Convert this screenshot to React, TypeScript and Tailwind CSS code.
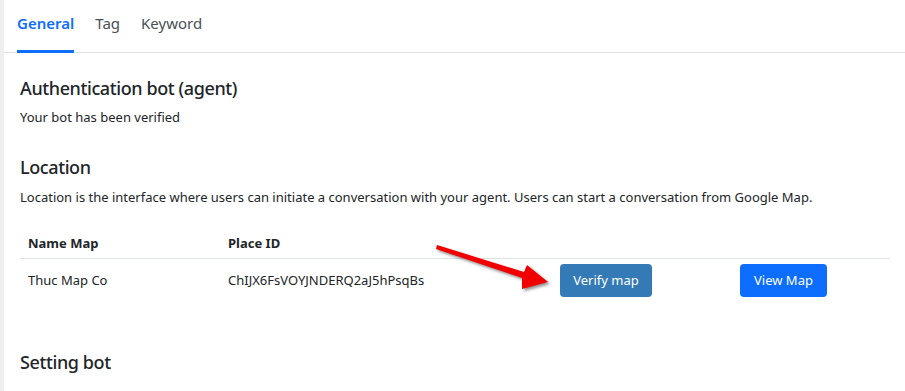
import React from "react";

export default function App() {
  return (
    <div className="relative w-[905px] h-[391px] overflow-hidden bg-white text-[#212529] flex" style={{ fontFamily: '"Noto Sans", "Open Sans", sans-serif' }}>
      <div className="w-[4px] shrink-0 bg-[#efefef]" />
      <div className="flex-1 flex flex-col">
        <div className="h-[53px] border-b border-[#dee2e6] flex items-stretch pl-[13px] gap-[21px] text-[15px]">
          <div className="relative flex items-center text-[#0d6efd] font-semibold pb-[6px]">
            General
            <div className="absolute left-0 right-0 bottom-[-1px] h-[3px] bg-[#0d6efd]" />
          </div>
          <div className="flex items-center pb-[6px] text-[#495057]">Tag</div>
          <div className="flex items-center pb-[6px] text-[#495057]">Keyword</div>
        </div>
        <div className="pl-[16px] pr-[15px]">
          <div className="mt-[23px] text-[18px] leading-[24px] font-medium tracking-[-0.4px]">Authentication bot (agent)</div>
          <div className="mt-[7px] text-[13px] leading-[20px]">Your bot has been verified</div>
          <div className="mt-[28px] text-[18px] leading-[24px] font-medium tracking-[-0.4px]">Location</div>
          <div className="mt-[8px] text-[13px] leading-[20px]">Location is the interface where users can initiate a conversation with your agent. Users can start a conversation from Google Map.</div>
          <div className="mt-[22px] w-[870px] text-[13px]">
            <div className="grid grid-cols-[200px_332px_180px_158px] h-[30px] items-center border-b border-[#dee2e6] font-bold">
              <div className="px-[8px]">Name Map</div>
              <div className="px-[8px]">Place ID</div>
              <div />
              <div />
            </div>
            <div className="grid grid-cols-[200px_332px_180px_158px] h-[43px] items-center">
              <div className="px-[8px]">Thuc Map Co</div>
              <div className="px-[8px]">ChIJX6FsVOYJNDERQ2aJ5hPsqBs</div>
              <div className="px-[8px]">
                <button className="h-[33px] w-[92px] rounded-[4px] bg-[#337ab7] text-white text-[13px]">Verify map</button>
              </div>
              <div className="px-[8px]">
                <button className="h-[33px] w-[87px] rounded-[4px] bg-[#0d6efd] text-white text-[13px]">View Map</button>
              </div>
            </div>
          </div>
          <div className="mt-[48px] text-[18px] leading-[24px] font-medium tracking-[-0.4px]">Setting bot</div>
        </div>
      </div>
      <svg className="absolute left-[430px] top-[238px]" width="130" height="60" viewBox="430 238 130 60" style={{ filter: "drop-shadow(2px 2px 1.5px rgba(0,0,0,0.45))" }}>
        <polygon points="437,245 524,272 527,265 548,282 522,289 522,278 436,249" fill="#f00000" />
      </svg>
    </div>
  );
}
